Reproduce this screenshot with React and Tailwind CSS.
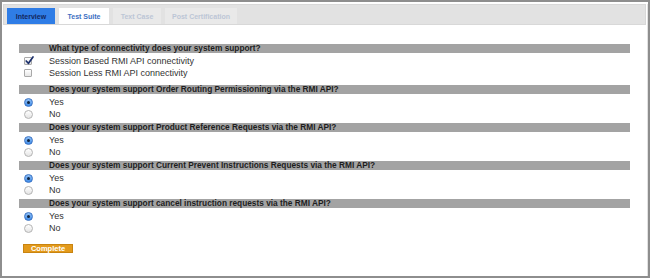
import React from 'react';

const font = { fontFamily: '"Liberation Sans", Arial, sans-serif' };

const sections = [
  {
    type: 'checkbox',
    question: 'What type of connectivity does your system support?',
    options: [
      { label: 'Session Based RMI API connectivity', checked: true },
      { label: 'Session Less RMI API connectivity', checked: false },
    ],
  },
  {
    type: 'radio',
    question: 'Does your system support Order Routing Permissioning via the RMI API?',
    options: [
      { label: 'Yes', checked: true },
      { label: 'No', checked: false },
    ],
  },
  {
    type: 'radio',
    question: 'Does your system support Product Reference Requests via the RMI API?',
    options: [
      { label: 'Yes', checked: true },
      { label: 'No', checked: false },
    ],
  },
  {
    type: 'radio',
    question: 'Does your system support Current Prevent Instructions Requests via the RMI API?',
    options: [
      { label: 'Yes', checked: true },
      { label: 'No', checked: false },
    ],
  },
  {
    type: 'radio',
    question: 'Does your system support cancel instruction requests via the RMI API?',
    options: [
      { label: 'Yes', checked: true },
      { label: 'No', checked: false },
    ],
  },
];

const Checkbox = ({ checked }) => (
  <span className="relative w-[8px] h-[8px] rounded-[1px] border border-[#a9a9a9] bg-gradient-to-b from-white to-[#e6e6e6] shrink-0">
    {checked && (
      <svg className="absolute -top-[3px] -left-[1px]" width="11" height="11" viewBox="0 0 11 11">
        <path d="M2.2 6 L4.5 8.3 L9 2" fill="none" stroke="#1b2f6b" strokeWidth="1.7" strokeLinecap="round" strokeLinejoin="round" />
      </svg>
    )}
  </span>
);

const Radio = ({ checked }) =>
  checked ? (
    <span className="w-[9px] h-[9px] rounded-full border border-[#3b73c4] bg-gradient-to-b from-[#8fc0f5] to-[#3d8be8] flex items-center justify-center shrink-0">
      <span className="w-[3px] h-[3px] rounded-full bg-[#10243f]" />
    </span>
  ) : (
    <span className="w-[9px] h-[9px] rounded-full border border-[#b4b4b4] bg-gradient-to-b from-white to-[#e4e4e4] shrink-0" />
  );

const Section = ({ section, first }) => (
  <div className={first ? 'mb-[6px]' : 'mb-[3px]'}>
    <div className="h-[9px] bg-[#a3a3a3] flex items-center pl-[30px] text-[8.3px] font-bold text-[#1e1e1e] leading-none whitespace-nowrap">
      {section.question}
    </div>
    <div className="pt-[2px]">
      {section.options.map((opt, i) => (
        <div key={i} className="h-[12px] flex items-center">
          <span className="w-[30px] flex pl-[5px]">
            {section.type === 'checkbox' ? <Checkbox checked={opt.checked} /> : <Radio checked={opt.checked} />}
          </span>
          <span className="text-[9px] text-[#333] leading-none">{opt.label}</span>
        </div>
      ))}
    </div>
  </div>
);

export default function App() {
  const tabs = [
    { label: 'Interview', cls: 'w-[48px] bg-[#2f7de6] text-[#13275e]' },
    { label: 'Test Suite', cls: 'w-[50px] bg-white text-[#3d6fc2]' },
    { label: 'Text Case', cls: 'w-[48px] bg-[#e9e9e9] text-[#bcc6d6]' },
    { label: 'Post Certification', cls: 'w-[72px] bg-[#e9e9e9] text-[#bcc6d6]' },
  ];

  return (
    <div style={font} className="w-[650px] h-[278px] border-2 border-[#8e8e8e] bg-white overflow-hidden">
      <div className="h-full border-r border-b border-[#e2e2e2]">
        <div className="ml-[1px] mr-[1px] mt-[2px] h-[21px] bg-[#e2e2e2] border border-[#d8d8d8] flex items-end gap-[4px] pl-[3px]">
          {tabs.map((t) => (
            <div
              key={t.label}
              className={`h-[16px] flex items-center justify-center text-[7px] font-bold leading-none ${t.cls}`}
            >
              {t.label}
            </div>
          ))}
        </div>

        <div className="pl-[17px] w-[628px] pt-[19px]">
          {sections.map((s, i) => (
            <Section key={i} section={s} first={i === 0} />
          ))}

          <button className="mt-[10px] ml-[4px] w-[50px] h-[9px] bg-[#e39a1c] border border-[#c98410] text-white text-[7.5px] font-bold leading-none flex items-center justify-center">
            Complete
          </button>
        </div>
      </div>
    </div>
  );
}
